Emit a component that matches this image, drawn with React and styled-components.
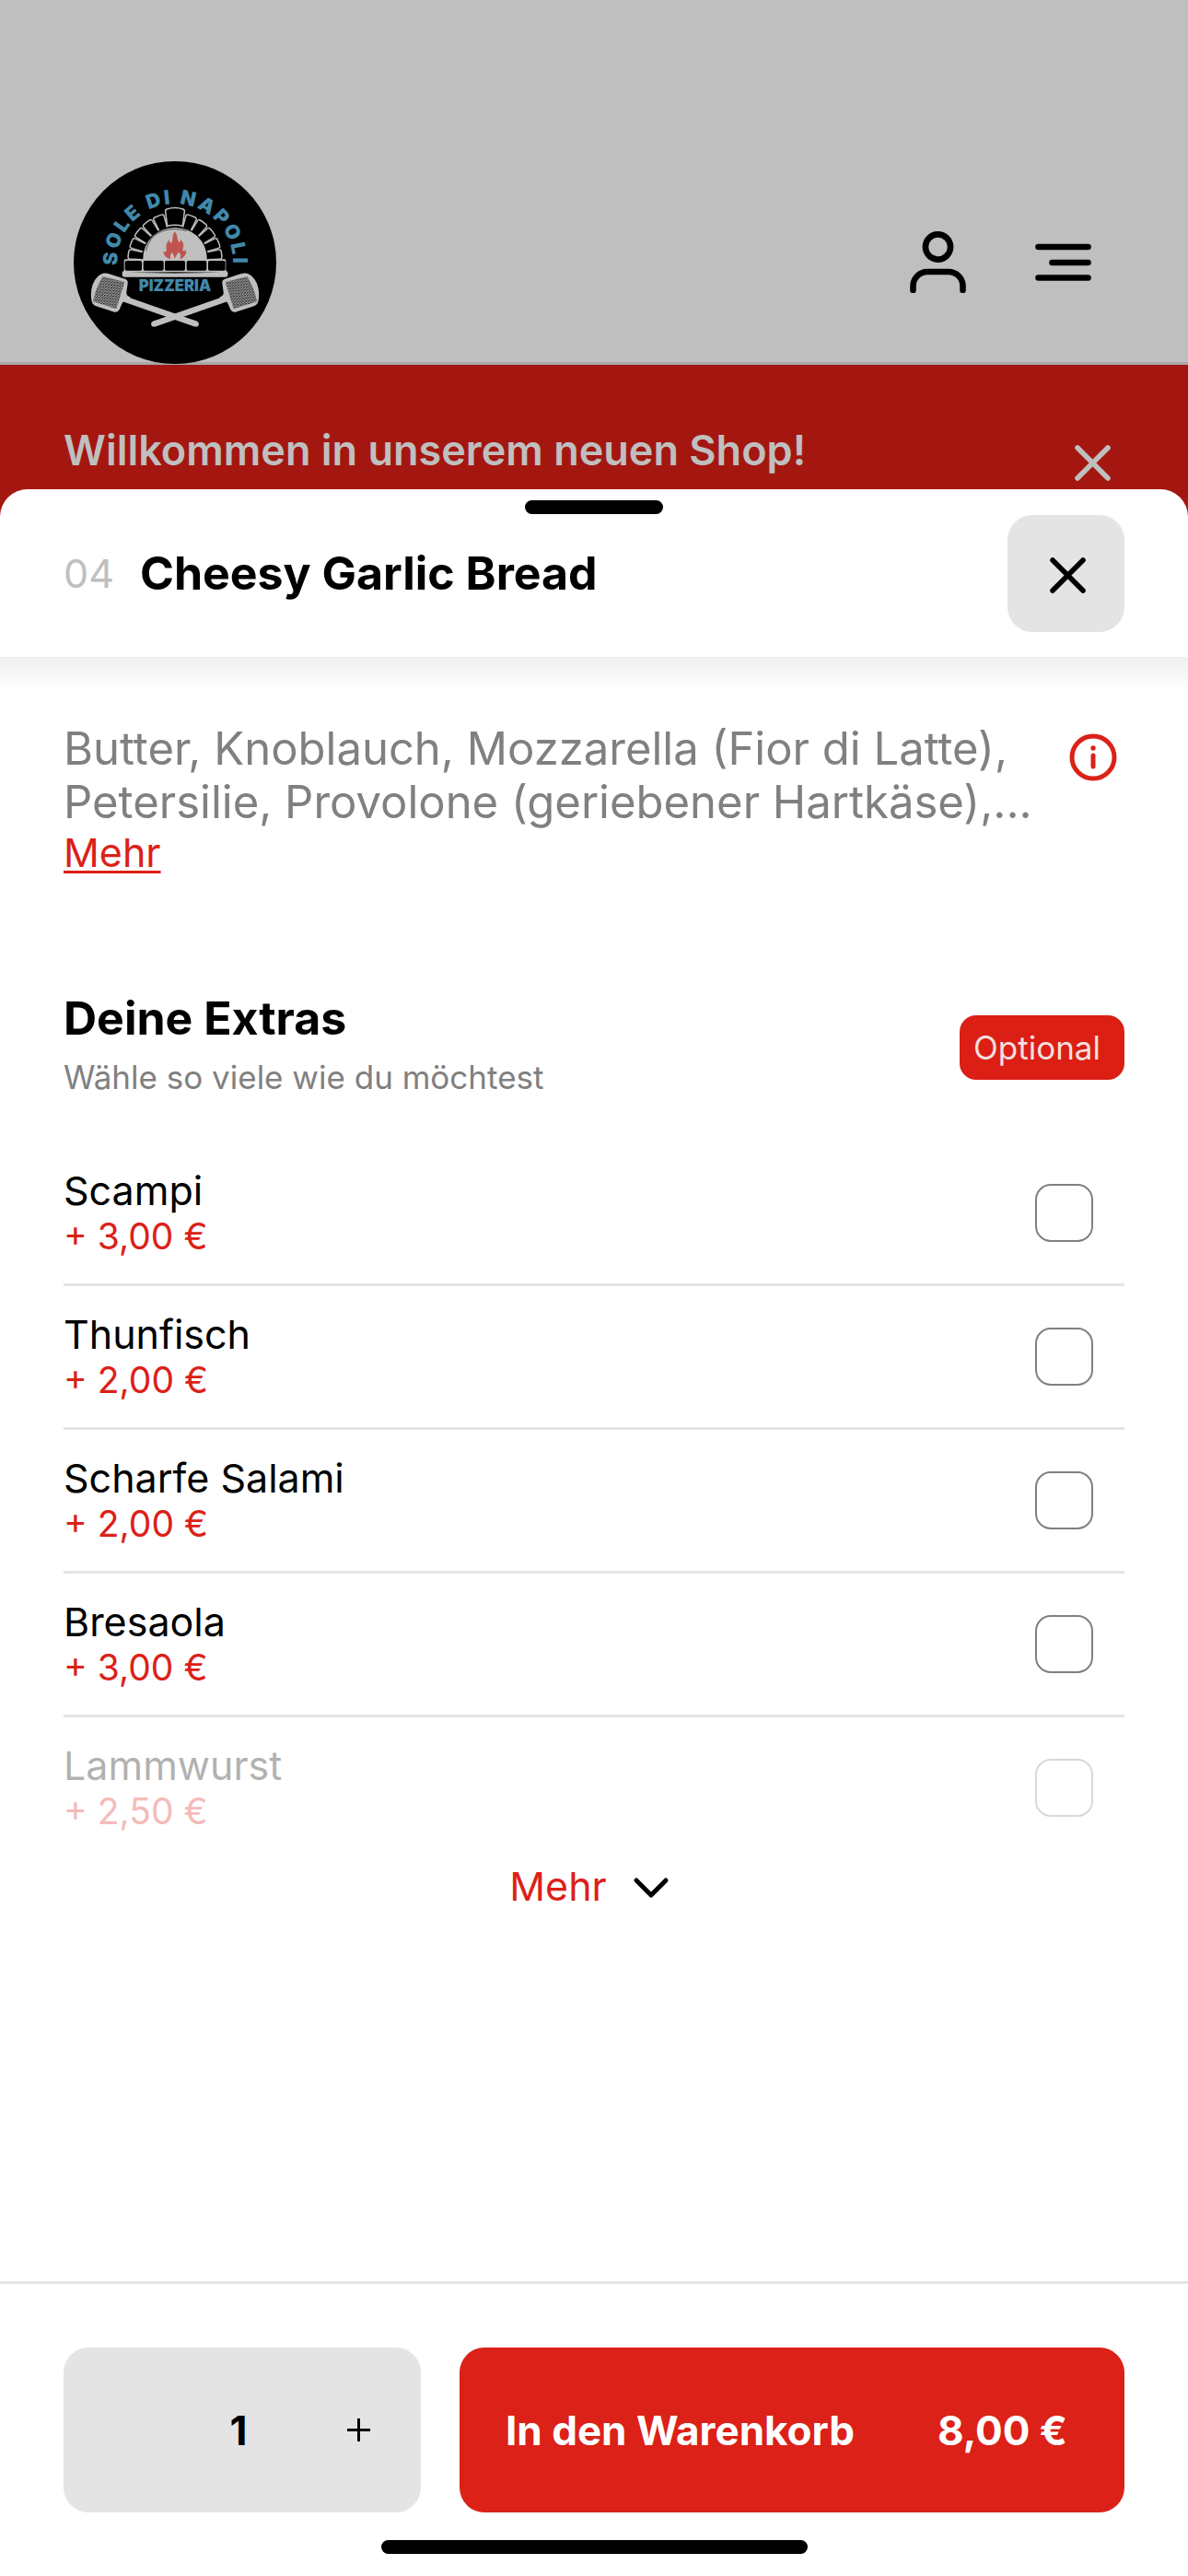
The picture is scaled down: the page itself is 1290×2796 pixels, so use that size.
import React, { useState } from "react";
import styled, { createGlobalStyle } from "styled-components";

const color = {
  brand: "#db2118",
  brandDim: "#a41711",
  dim: "#bfbfbf",
  muted: "#808080",
  line: "#e4e4e4",
  ink: "#000000",
};

const GlobalStyle = createGlobalStyle`
  *, *::before, *::after { box-sizing: border-box; }
  body {
    margin: 0;
    background: #ffffff;
    color: ${color.ink};
    font-family: Inter, "Liberation Sans", sans-serif;
  }
  h1, h2, p, ul { margin: 0; padding: 0; font-weight: inherit; }
  button {
    margin: 0;
    padding: 0;
    border: 0;
    background: none;
    color: inherit;
    font: inherit;
    cursor: pointer;
  }
`;

const Page = styled.div`
  min-height: 100vh;
  display: flex;
  flex-direction: column;
`;

const ShopHeader = styled.header`
  display: flex;
  align-items: flex-end;
  justify-content: space-between;
  height: 396px;
  padding: 0 105px 0 80px;
  background: ${color.dim};
  border-bottom: 3px solid #a8a8a8;
`;

const HeaderActions = styled.nav`
  display: flex;
  gap: 75px;
  margin-bottom: 75px;
`;

const IconButton = styled.button`
  display: flex;
  align-items: center;
  justify-content: center;
  flex: none;
`;

const Banner = styled.section`
  display: flex;
  align-items: flex-start;
  justify-content: space-between;
  height: 165px;
  padding: 63px 84px 0 69px;
  background: ${color.brandDim};
  color: ${color.dim};
`;

const BannerTitle = styled.h2`
  font-size: 45px;
  font-weight: 600;
  line-height: 60px;
`;

const BannerClose = styled(IconButton)`
  margin-top: 24px;
`;

const Sheet = styled.main`
  flex: 1;
  display: flex;
  flex-direction: column;
  margin-top: -30px;
  border-radius: 30px 30px 0 0;
  background: #ffffff;
`;

const SheetHeader = styled.div`
  position: relative;
  display: flex;
  align-items: center;
  height: 182px;
  padding: 0 69px;
`;

const Handle = styled.span`
  position: absolute;
  top: 12px;
  left: 50%;
  width: 150px;
  height: 15px;
  margin-left: -75px;
  border-radius: 8px;
  background: ${color.ink};
`;

const DishNumber = styled.span`
  margin-right: 28px;
  color: ${color.dim};
  font-size: 43px;
`;

const DishTitle = styled.h1`
  flex: 1;
  font-size: 50px;
  font-weight: 700;
  line-height: 60px;
`;

const CloseButton = styled(IconButton)`
  width: 127px;
  height: 127px;
  padding: 4px 0 0 4px;
  border-radius: 27px;
  background: ${color.line};
`;

const SheetBody = styled.div`
  flex: 1;
  padding: 71px 69px 0;
  background: linear-gradient(#f0f0f0, #f6f6f6 16px, #ffffff 36px);
`;

const DescriptionRow = styled.section`
  display: flex;
  align-items: flex-start;
  justify-content: space-between;
`;

const Description = styled.p`
  color: ${color.muted};
  font-size: 49px;
  line-height: 58px;
`;

const InfoButton = styled(IconButton)`
  margin: 12px 8px 0 0;
`;

const MoreLink = styled.a`
  display: block;
  width: max-content;
  color: ${color.brand};
  font-size: 43px;
  line-height: 50px;
  text-decoration: underline;
  text-decoration-thickness: 3px;
  text-underline-offset: 4px;
`;

const ExtrasHeader = styled.div`
  display: flex;
  align-items: center;
  justify-content: space-between;
  margin-top: 125px;
`;

const ExtrasTitle = styled.h2`
  font-size: 50px;
  font-weight: 700;
  line-height: 60px;
`;

const ExtrasHint = styled.p`
  margin-top: 4px;
  color: ${color.muted};
  font-size: 35px;
  line-height: 60px;
`;

const Badge = styled.span`
  padding: 0 26px 0 15px;
  border-radius: 18px;
  background: #db1f14;
  color: #f3dfde;
  font-size: 35px;
  line-height: 70px;
`;

const ExtrasList = styled.ul`
  margin-top: 41px;
  list-style: none;
`;

const ExtraRow = styled.li`
  & + & {
    border-top: 3px solid ${color.line};
  }
`;

const ExtraLabel = styled.label`
  display: flex;
  align-items: center;
  justify-content: space-between;
  height: 153px;
  padding-right: 34px;
  opacity: ${(p) => (p.$faded ? 0.3 : 1)};
  cursor: pointer;
`;

const ExtraName = styled.span`
  display: block;
  font-size: 43px;
  line-height: 50px;
`;

const ExtraPrice = styled.span`
  display: block;
  color: ${color.brand};
  font-size: 39px;
  line-height: 50px;
`;

const Checkbox = styled.input`
  appearance: none;
  width: 63px;
  height: 63px;
  margin: 0;
  border: 2px solid ${color.muted};
  border-radius: 17px;
  background: #ffffff;
  cursor: pointer;

  &:checked {
    background: ${color.brand};
    border-color: ${color.brand};
  }
`;

const ShowMore = styled.button`
  display: flex;
  align-items: center;
  gap: 22px;
  margin: 0 auto;
  padding-right: 4px;
  color: ${color.brand};
  font-size: 43px;
  line-height: 60px;
`;

const OrderBar = styled.footer`
  padding: 69px 69px 24px;
  border-top: 3px solid ${color.line};
`;

const OrderControls = styled.div`
  display: grid;
  grid-template-columns: 388px 1fr;
  gap: 42px;
  height: 179px;
`;

const Stepper = styled.div`
  display: grid;
  grid-template-columns: 128px 124px 1fr;
  border-radius: 27px;
  background: ${color.line};
`;

const Quantity = styled.output`
  align-self: center;
  text-align: center;
  font-size: 44px;
  font-weight: 700;
`;

const CartButton = styled.button`
  display: flex;
  align-items: center;
  justify-content: space-between;
  padding: 0 62px 0 50px;
  border-radius: 27px;
  background: ${color.brand};
  color: #ffffff;
  font-size: 44px;
  font-weight: 700;
`;

const HomeIndicator = styled.div`
  width: 463px;
  height: 15px;
  margin: 30px auto 0;
  border-radius: 8px;
  background: ${color.ink};
`;

const LogoLink = styled.a`
  display: block;
  width: 220px;
  height: 220px;
  margin-bottom: -2px;
`;

const LogoText = styled.text`
  fill: #4189ab;
  font-family: Inter, "Liberation Sans", sans-serif;
  font-size: ${(p) => p.$size}px;
  font-weight: 900;
  letter-spacing: ${(p) => p.$tracking || 0}px;
  text-anchor: middle;
`;

const ARCH = { x: 389, y: 364, inner: 109, outer: 153 };

const archPoint = (deg, r) => {
  const a = (deg * Math.PI) / 180;
  return [ARCH.x - Math.cos(a) * r, ARCH.y - Math.sin(a) * r];
};

const brickPath = (from, to) => {
  const a = archPoint(from + 0.5, ARCH.inner);
  const b = archPoint(from + 1, ARCH.outer - 7);
  const c = archPoint(from + 3.5, ARCH.outer);
  const b0 = archPoint(from + 1, ARCH.outer);
  const d = archPoint(to - 3.5, ARCH.outer);
  const e0 = archPoint(to - 1, ARCH.outer);
  const e = archPoint(to - 1, ARCH.outer - 7);
  const f = archPoint(to - 0.5, ARCH.inner);
  return `M${a} L${b} Q${b0} ${c} A${ARCH.outer} ${ARCH.outer} 0 0 1 ${d} Q${e0} ${e} L${f}`;
};

const BRICKS = [
  [0, 14], [14, 29], [29, 45], [45, 61], [61, 77],
  [103, 119], [119, 135], [135, 151], [151, 166], [166, 180],
];

const BASE_BRICKS = [
  [226, 55], [286, 66], [356, 66], [427, 65], [497, 56],
];

function Peel() {
  return (
    <g>
      <path d="M226 492 L458 573" stroke={color.dim} strokeWidth="19" strokeLinecap="butt" />
      <path d="M444 559 L462 565 Q469 569 466 577 Q463 584 455 581 L438 575Z" fill={color.dim} />
      <path
        d="M146 412 Q158 405 172 409 L226 426 Q237 430 235 441 L231 469 Q230 478 236 482 L244 486 L238 502 L228 500 Q219 499 216 507 L208 526 Q203 536 192 534 L132 515 Q119 510 117 496 Q111 458 128 430 Q136 417 146 412Z"
        fill={color.dim}
      />
      <path d="M154 418 L225 436 L198 524 L122 500 Q130 455 154 418Z" fill="url(#mesh)" />
    </g>
  );
}

function Logo() {
  return (
    <svg width="220" height="220" viewBox="59 43 660 660" fill="none" role="img" aria-label="Sole di Napoli Pizzeria">
      <defs>
        <path id="nameArc" d="M204 403 A188 188 0 1 1 574 403" />
        <pattern id="mesh" width="9" height="9" patternUnits="userSpaceOnUse" patternTransform="rotate(6)">
          <rect x="0" y="0" width="5" height="4" fill="#000" />
          <rect x="4.5" y="4.5" width="4" height="4" fill="#000" />
        </pattern>
      </defs>
      <circle cx="389" cy="373" r="330" fill="#000" />
      <LogoText $size={64} $tracking={8}>
        <textPath href="#nameArc" startOffset="50%">SOLE DI NAPOLI</textPath>
      </LogoText>

      <g stroke={color.dim} strokeWidth="4.5" strokeLinejoin="round">
        {BRICKS.map(([from, to]) => (
          <path key={from} d={brickPath(from, to)} />
        ))}
        <path d="M364 254 L358 207 Q357 201 363 199 Q389 190 415 199 Q421 201 420 207 L414 254 Q389 247 364 254Z" fill="#000" />
      </g>
      <path d="M285 364 V358 A104 99 0 0 1 493 358 V364Z" fill={color.dim} />
      <path d="M294 335 Q306 284 350 270 Q389 258 428 270" stroke="#222" strokeWidth="2" />

      <path
        d="M388 272 C399 284 395 296 401 305 C404 310 408 306 406 297 C417 305 419 317 415 326 C412 336 419 339 425 332 C427 346 420 358 404 362 C411 352 407 343 400 339 C396 349 390 349 389 361 C384 355 386 346 379 340 C374 346 371 353 376 362 C360 359 351 349 352 336 C358 341 363 337 361 328 C359 315 363 306 372 298 C370 308 375 313 379 306 C384 297 378 287 388 272Z"
        fill="#c0544f"
      />

      <rect x="223" y="362" width="332" height="42" rx="5" fill={color.dim} />
      {BASE_BRICKS.map(([x, w]) => (
        <rect key={x} x={x} y="367" width={w} height="32" rx="5" fill="#000" />
      ))}
      <rect x="217" y="400" width="344" height="20" rx="7" fill={color.dim} />
      <path d="M240 405 L389 403 L540 405 L389 408Z" fill="#333" />

      <LogoText $size={50} x="389" y="465">PIZZERIA</LogoText>

      <Peel />
      <g transform="translate(778 0) scale(-1 1)">
        <Peel />
      </g>
    </svg>
  );
}

function UserIcon() {
  return (
    <svg width="61" height="67" viewBox="0 0 61 67" fill="none" stroke="currentColor" strokeWidth="6.6" strokeLinecap="round">
      <circle cx="30.5" cy="17" r="13.6" />
      <path d="M3.5 64 V59.5 A15.5 15.5 0 0 1 19 44 H42 A15.5 15.5 0 0 1 57.5 59.5 V64" />
    </svg>
  );
}

function MenuIcon() {
  return (
    <svg width="61" height="67" viewBox="0 0 61 67" fill="none" stroke="currentColor" strokeWidth="6.6" strokeLinecap="round">
      <path d="M3.5 17 H57.5 M18.5 34 H57.5 M3.5 50.5 H57.5" />
    </svg>
  );
}

function CrossIcon() {
  return (
    <svg width="39" height="39" viewBox="0 0 39 39" fill="none" stroke="currentColor" strokeWidth="5.6" strokeLinecap="round">
      <path d="M3 3 L36 36 M36 3 L3 36" />
    </svg>
  );
}

function InfoIcon() {
  return (
    <svg width="52" height="52" viewBox="0 0 52 52" fill="none" stroke={color.brand} strokeWidth="5" strokeLinecap="round">
      <circle cx="26" cy="26" r="23" />
      <path d="M26 24 V36" />
      <circle cx="26" cy="16" r="2.7" fill={color.brand} stroke="none" />
    </svg>
  );
}

function ChevronIcon() {
  return (
    <svg width="52" height="52" viewBox="0 0 52 52" fill="none" stroke="#000" strokeWidth="5" strokeLinecap="round" strokeLinejoin="round">
      <path d="M10 20 L26 36 L42 20" />
    </svg>
  );
}

function PlusIcon() {
  return (
    <svg width="25" height="25" viewBox="0 0 25 25" stroke="#000" strokeWidth="3">
      <path d="M12.5 0 V25 M0 12.5 H25" />
    </svg>
  );
}

const EXTRAS = [
  { id: "scampi", name: "Scampi", price: "3,00" },
  { id: "thunfisch", name: "Thunfisch", price: "2,00" },
  { id: "salami", name: "Scharfe Salami", price: "2,00" },
  { id: "bresaola", name: "Bresaola", price: "3,00" },
  { id: "lammwurst", name: "Lammwurst", price: "2,50", faded: true },
];

const UNIT_PRICE = 8;

export default function App() {
  const [quantity, setQuantity] = useState(1);
  const total = (UNIT_PRICE * quantity).toFixed(2).replace(".", ",");

  return (
    <Page>
      <GlobalStyle />
      <ShopHeader>
        <LogoLink href="#start">
          <Logo />
        </LogoLink>
        <HeaderActions>
          <IconButton aria-label="Konto"><UserIcon /></IconButton>
          <IconButton aria-label="Menü"><MenuIcon /></IconButton>
        </HeaderActions>
      </ShopHeader>

      <Banner>
        <BannerTitle>Willkommen in unserem neuen Shop!</BannerTitle>
        <BannerClose aria-label="Hinweis schließen"><CrossIcon /></BannerClose>
      </Banner>

      <Sheet>
        <SheetHeader>
          <Handle />
          <DishNumber>04</DishNumber>
          <DishTitle>Cheesy Garlic Bread</DishTitle>
          <CloseButton aria-label="Schließen"><CrossIcon /></CloseButton>
        </SheetHeader>

        <SheetBody>
          <DescriptionRow>
            <div>
              <Description>
                Butter, Knoblauch, Mozzarella (Fior di Latte),
                <br />
                Petersilie, Provolone (geriebener Hartkäse),...
              </Description>
              <MoreLink href="#mehr">Mehr</MoreLink>
            </div>
            <InfoButton aria-label="Allergene"><InfoIcon /></InfoButton>
          </DescriptionRow>

          <ExtrasHeader>
            <div>
              <ExtrasTitle>Deine Extras</ExtrasTitle>
              <ExtrasHint>Wähle so viele wie du möchtest</ExtrasHint>
            </div>
            <Badge>Optional</Badge>
          </ExtrasHeader>

          <ExtrasList>
            {EXTRAS.map((extra) => (
              <ExtraRow key={extra.id}>
                <ExtraLabel htmlFor={extra.id} $faded={extra.faded}>
                  <span>
                    <ExtraName>{extra.name}</ExtraName>
                    <ExtraPrice>+ {extra.price} €</ExtraPrice>
                  </span>
                  <Checkbox type="checkbox" id={extra.id} />
                </ExtraLabel>
              </ExtraRow>
            ))}
          </ExtrasList>
          <ShowMore>
            Mehr
            <ChevronIcon />
          </ShowMore>
        </SheetBody>

        <OrderBar>
          <OrderControls>
            <Stepper>
              <IconButton
                aria-label="Menge verringern"
                disabled={quantity === 1}
                onClick={() => setQuantity(quantity - 1)}
              />
              <Quantity>{quantity}</Quantity>
              <IconButton aria-label="Menge erhöhen" onClick={() => setQuantity(quantity + 1)}>
                <PlusIcon />
              </IconButton>
            </Stepper>
            <CartButton>
              <span>In den Warenkorb</span>
              <span>{total} €</span>
            </CartButton>
          </OrderControls>
          <HomeIndicator />
        </OrderBar>
      </Sheet>
    </Page>
  );
}
